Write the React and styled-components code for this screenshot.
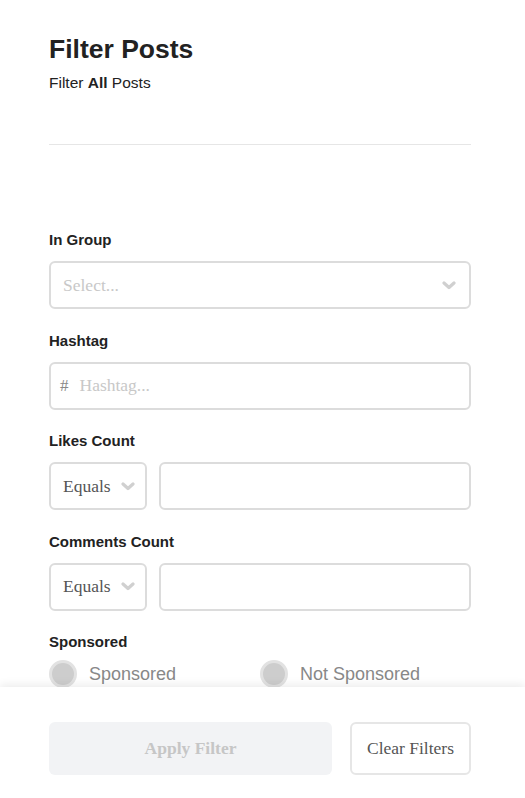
import React from 'react'
import styled, { createGlobalStyle } from 'styled-components'

const GlobalStyle = createGlobalStyle`
  html, body {
    margin: 0;
    padding: 0;
    background: #fff;
  }
  body {
    font-family: "Liberation Sans", Arial, sans-serif;
    color: #222;
  }
`

function Chevron () {
  return (
    <ChevronIcon viewBox="0 0 14 9" aria-hidden="true">
      <polyline points="2,2 7,6.5 12,2" />
    </ChevronIcon>
  )
}

export default function App () {
  return (
    <Page>
      <GlobalStyle />
      <Content>
        <Header>
          <Title>Filter Posts</Title>
          <Subtitle>Filter <b>All</b> Posts</Subtitle>
        </Header>
        <Divider />

        <Fields>
          <Field>
            <Label>In Group</Label>
            <SelectBox>
              <Placeholder>Select...</Placeholder>
              <Chevron />
            </SelectBox>
          </Field>

          <Field>
            <Label>Hashtag</Label>
            <InputBox>
              <Hash>#</Hash>
              <Placeholder>Hashtag...</Placeholder>
            </InputBox>
          </Field>

          <Field>
            <Label>Likes Count</Label>
            <CountRow>
              <OperatorBox>
                <Value>Equals</Value>
                <Chevron />
              </OperatorBox>
              <InputBox $grow />
            </CountRow>
          </Field>

          <Field>
            <Label>Comments Count</Label>
            <CountRow>
              <OperatorBox>
                <Value>Equals</Value>
                <Chevron />
              </OperatorBox>
              <InputBox $grow />
            </CountRow>
          </Field>

          <Field>
            <Label>Sponsored</Label>
            <RadioRow>
              <RadioOption>
                <RadioDot />
                Sponsored
              </RadioOption>
              <RadioOption>
                <RadioDot />
                Not Sponsored
              </RadioOption>
            </RadioRow>
          </Field>
        </Fields>
      </Content>

      <Footer>
        <ApplyButton disabled>Apply Filter</ApplyButton>
        <ClearButton>Clear Filters</ClearButton>
      </Footer>
    </Page>
  )
}

const Page = styled.div`
  height: 100vh;
  display: flex;
  flex-direction: column;
  overflow: hidden;
`

const Content = styled.div`
  flex: 1;
  min-height: 0;
  overflow: hidden;
  padding: 34px 54px 0 49px;
`

const Header = styled.div`
  display: flex;
  flex-direction: column;
  gap: 9px;
`

const Title = styled.h1`
  margin: 0;
  font-size: 26.5px;
  line-height: 31px;
  font-weight: 700;
  color: #222;
`

const Subtitle = styled.div`
  font-size: 15.5px;
  line-height: 18px;
  color: #222;

  & b {
    font-weight: 700;
  }
`

const Divider = styled.hr`
  margin: 52px 0 0;
  border: none;
  border-top: 1px solid #e6e6e6;
`

const Fields = styled.div`
  margin-top: 86px;
  display: flex;
  flex-direction: column;
  gap: 22.5px;
`

const Field = styled.div`
  display: flex;
  flex-direction: column;
  gap: 12px;
`

const Label = styled.div`
  font-size: 15px;
  line-height: 18px;
  font-weight: 700;
  color: #222;
`

const Box = styled.div`
  box-sizing: border-box;
  height: 48px;
  border: 2px solid #dcdcdc;
  border-radius: 6px;
  background: #fff;
  display: flex;
  align-items: center;
  font-family: "Liberation Serif", "Times New Roman", serif;
  font-size: 17.5px;
`

const SelectBox = styled(Box)`
  padding: 0 13px 0 12px;
  justify-content: space-between;
`

const InputBox = styled(Box)`
  flex: ${({ $grow }) => ($grow ? 1 : 'none')};
  padding: 0 9px;
  gap: 11px;
`

const OperatorBox = styled(Box)`
  width: 98px;
  flex: none;
  padding: 0 10px 0 12px;
  justify-content: space-between;
`

const Placeholder = styled.span`
  color: #c8c8c8;
`

const Value = styled.span`
  color: #555;
`

const Hash = styled.span`
  color: #888;
  font-size: 17px;
`

const ChevronIcon = styled.svg`
  width: 14px;
  height: 9px;
  flex: none;
  fill: none;
  stroke: #d0d0d0;
  stroke-width: 3.2;
  stroke-linecap: round;
  stroke-linejoin: round;
`

const CountRow = styled.div`
  display: flex;
  gap: 12px;
`

const RadioRow = styled.div`
  display: grid;
  grid-template-columns: 211px 1fr;
  margin-top: -3px;
`

const RadioOption = styled.label`
  display: flex;
  align-items: center;
  gap: 12px;
  font-size: 18px;
  color: #888;
`

const RadioDot = styled.span`
  box-sizing: border-box;
  width: 28px;
  height: 28px;
  border-radius: 50%;
  border: 3px solid #e2e2e2;
  background: #cdcdcd;
  flex: none;
`

const Footer = styled.div`
  flex: none;
  position: relative;
  z-index: 1;
  background: #fff;
  box-shadow: 0 -3px 8px rgba(0, 0, 0, 0.07);
  padding: 35px 54px 23px 49px;
  display: flex;
  gap: 18px;
`

const BaseButton = styled.button`
  box-sizing: border-box;
  height: 53px;
  border-radius: 6px;
  font-family: "Liberation Serif", "Times New Roman", serif;
  font-size: 17.5px;
`

const ApplyButton = styled(BaseButton)`
  flex: 1;
  border: none;
  background: #f2f3f5;
  color: #c6c6c6;
  font-weight: 700;
`

const ClearButton = styled(BaseButton)`
  width: 121px;
  border: 2px solid #e6e6e6;
  background: #fff;
  color: #555;
`
